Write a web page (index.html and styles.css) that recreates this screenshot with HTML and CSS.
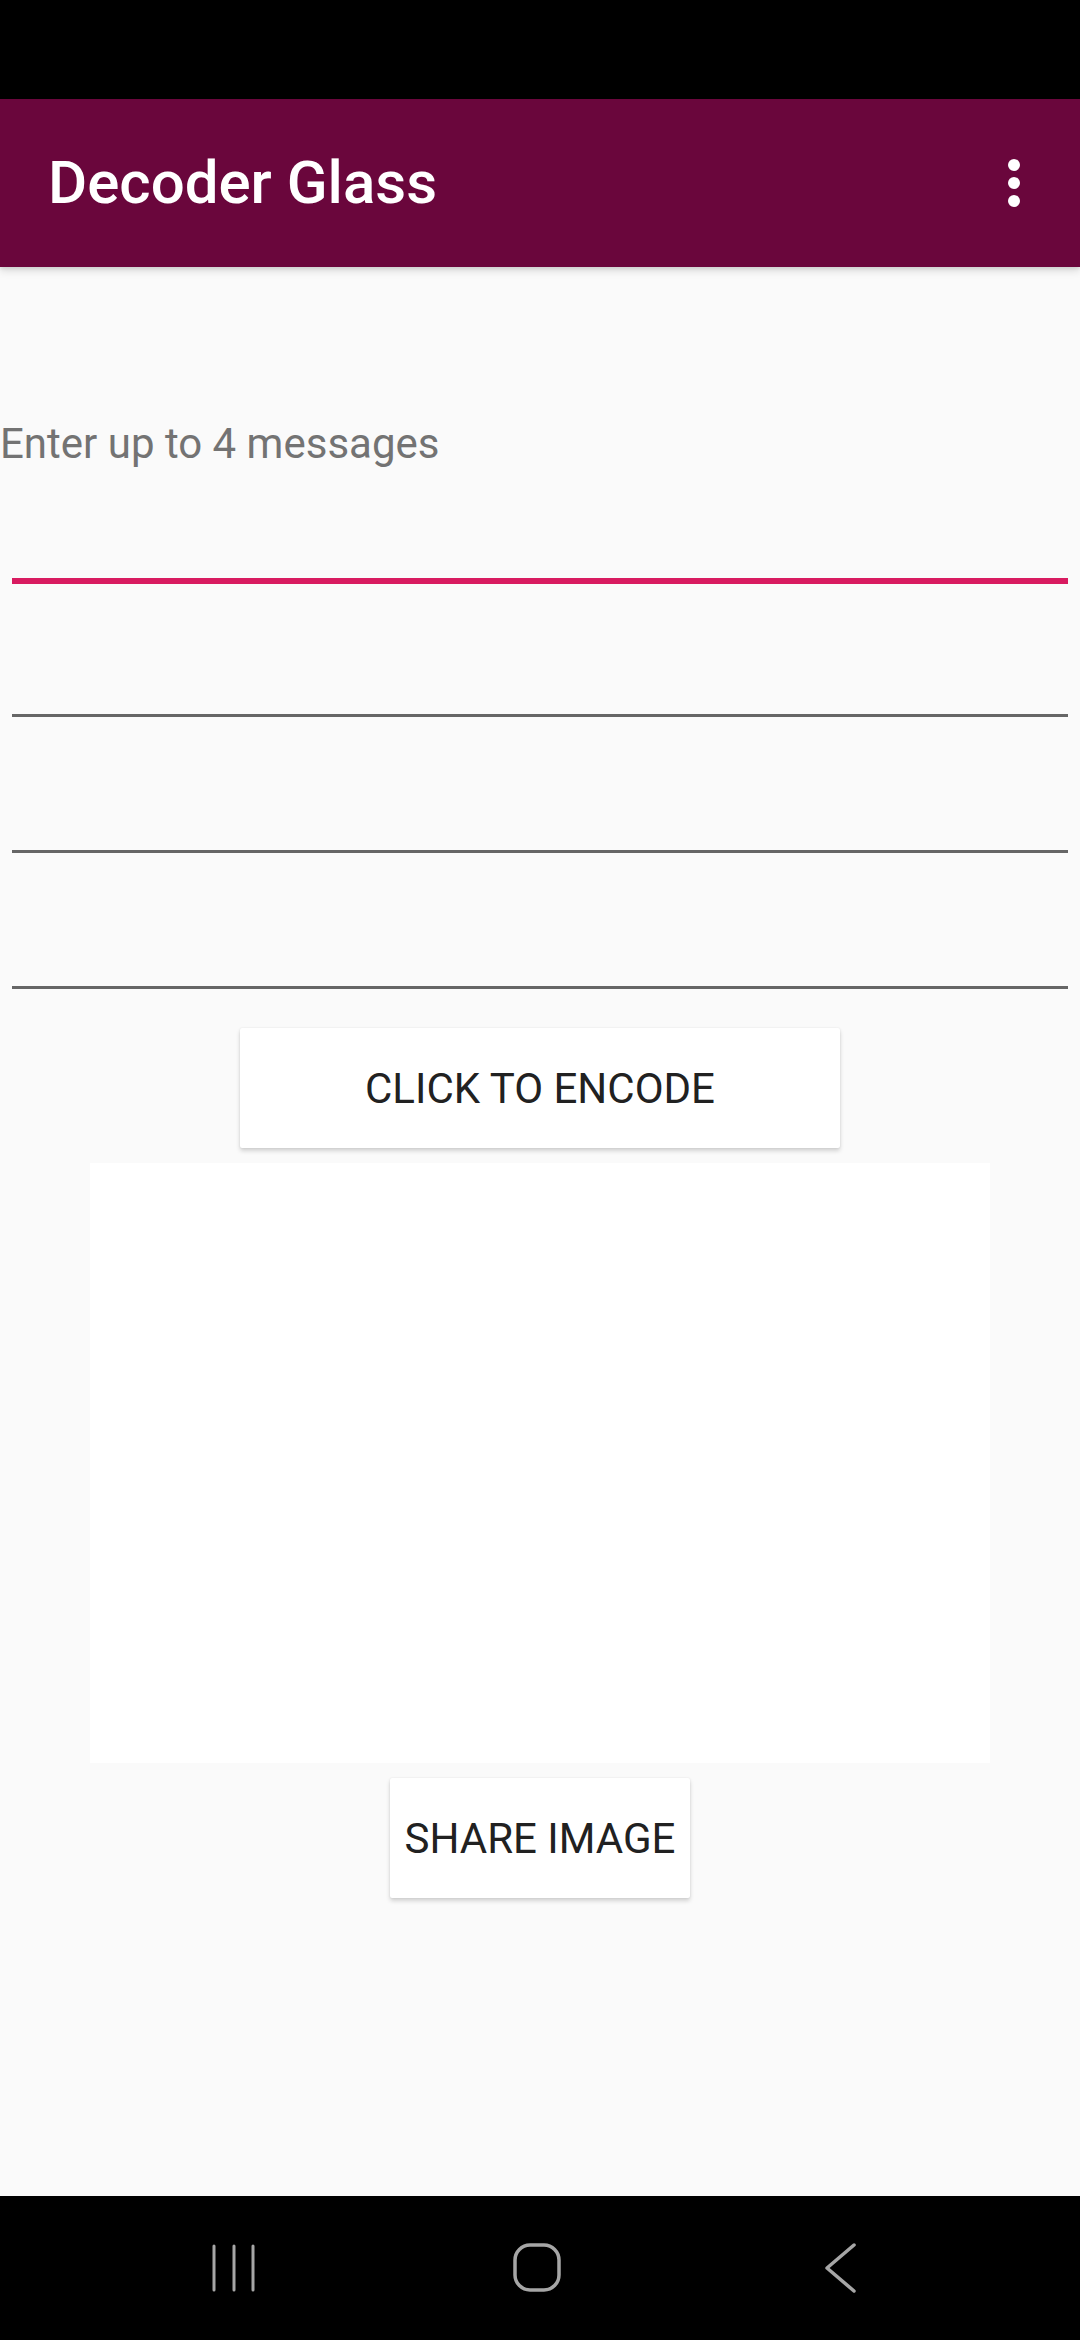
FILE: index.html
```html
<!DOCTYPE html>
<html>
<head>
<meta charset="utf-8">
<link rel="stylesheet" href="styles.css">
</head>
<body>
<div class="screen">
  <div class="status"></div>
  <header class="appbar">
    <div class="title">Decoder Glass</div>
    <svg class="overflow" width="24" height="60" viewBox="0 0 24 60">
      <circle cx="12" cy="12" r="6" fill="#fff"/>
      <circle cx="12" cy="30" r="6" fill="#fff"/>
      <circle cx="12" cy="48" r="6" fill="#fff"/>
    </svg>
  </header>
  <main class="content">
    <div class="hint">Enter up to 4 messages</div>
    <div class="field focused"></div>
    <div class="field"></div>
    <div class="field"></div>
    <div class="field"></div>
    <button class="btn encode">CLICK TO ENCODE</button>
    <div class="image"></div>
    <button class="btn share">SHARE IMAGE</button>
  </main>
  <nav class="navbar">
    <svg class="nav-icon" width="60" height="60" viewBox="0 0 60 60">
      <g stroke="#a6a6a6" stroke-width="3" stroke-linecap="round">
        <line x1="9" y1="8" x2="9" y2="52"/>
        <line x1="29" y1="8" x2="29" y2="52"/>
        <line x1="48" y1="8" x2="48" y2="52"/>
      </g>
    </svg>
    <svg class="nav-icon" width="60" height="60" viewBox="0 0 60 60">
      <rect x="7" y="7" width="44" height="45" rx="15" fill="none" stroke="#a6a6a6" stroke-width="3.5"/>
    </svg>
    <svg class="nav-icon" width="60" height="60" viewBox="0 0 60 60">
      <polyline points="44,7 17,30 44,53" fill="none" stroke="#a6a6a6" stroke-width="3.5" stroke-linecap="round" stroke-linejoin="round"/>
    </svg>
  </nav>
</div>
</body>
</html>
```

FILE: styles.css
```css
html, body {
  margin: 0;
  padding: 0;
}
body {
  background: #fafafa;
  font-family: Roboto, "Noto Sans", sans-serif;
}
.screen {
  width: 1080px;
  height: 2340px;
  display: flex;
  flex-direction: column;
  overflow: hidden;
}
.status {
  height: 99px;
  background: #000;
  flex: none;
}
.appbar {
  height: 168px;
  flex: none;
  background: #6a063c;
  display: flex;
  align-items: center;
  justify-content: space-between;
  padding: 0 54px 0 48px;
  box-sizing: border-box;
  position: relative;
  z-index: 2;
  box-shadow: 0 4px 8px rgba(0,0,0,0.12), 0 2px 3px rgba(0,0,0,0.08);
}
.title {
  color: #fff;
  font-size: 60px;
  font-weight: 500;
  line-height: 168px;
  height: 168px;
}
.overflow {
  display: block;
}
.content {
  flex: 1;
  display: flex;
  flex-direction: column;
  align-items: stretch;
}
.hint {
  margin-top: 153px;
  height: 47px;
  line-height: 47px;
  font-size: 42px;
  color: #737373;
}
.field {
  height: 136px;
  margin: 0 12px;
  border-bottom: 3px solid #666;
  box-sizing: border-box;
  flex: none;
}
.field.focused {
  height: 117px;
  border-bottom: 6px solid #d81b60;
  margin-bottom: -3px;
}
.btn {
  align-self: center;
  flex: none;
  height: 120px;
  border: none;
  background: #fff;
  color: #212121;
  font-family: Roboto, "Noto Sans", sans-serif;
  font-size: 42px;
  font-weight: 400;
  letter-spacing: 0;
  padding: 0;
  border-radius: 2px;
  box-shadow: 0 3px 4px rgba(0,0,0,0.16), 0 0 2px rgba(0,0,0,0.10);
}
.encode {
  width: 600px;
  margin-top: 39px;
}
.image {
  align-self: center;
  width: 900px;
  height: 600px;
  background: #fff;
  margin-top: 15px;
  flex: none;
}
.share {
  width: 300px;
  margin-top: 15px;
}
.navbar {
  height: 144px;
  flex: none;
  background: #000;
  display: flex;
  align-items: center;
  justify-content: space-between;
  padding: 0 210px 0 205px;
  box-sizing: border-box;
}
.nav-icon {
  display: block;
}
```
